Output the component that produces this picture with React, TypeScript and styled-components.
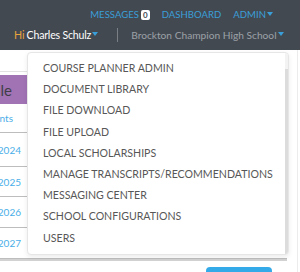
import React from 'react'
import styled, { createGlobalStyle } from 'styled-components'

const GlobalStyle = createGlobalStyle`
  html, body {
    margin: 0;
    padding: 0;
    background: #ffffff;
    font-family: Lato, 'Open Sans', sans-serif;
  }
`

const Header = styled.header`
  background: #434951;
  height: 50px;
  box-sizing: border-box;
  padding: 8px 0 0 14px;
  display: flex;
  flex-direction: column;
  gap: 5px;
`

const TopNav = styled.nav`
  display: flex;
  justify-content: flex-end;
  align-items: center;
  gap: 12px;
  padding-right: 27px;
  height: 13px;
`

const NavLink = styled.span`
  color: #3a9fd8;
  font-size: 9.6px;
  display: flex;
  align-items: center;
  white-space: nowrap;
`

const Badge = styled.span`
  background: #ffffff;
  color: #434951;
  font-size: 8px;
  font-weight: 700;
  border-radius: 2px;
  padding: 1px 2px;
  margin-left: 2px;
  line-height: 8px;
`

const Caret = styled.span<{ $color?: string }>`
  display: inline-block;
  width: 0;
  height: 0;
  margin-left: 1px;
  border-left: 3.5px solid transparent;
  border-right: 3.5px solid transparent;
  border-top: 4px solid ${(p) => p.$color || '#3a9fd8'};
  position: relative;
  top: -1px;
`

const UserRow = styled.div`
  display: flex;
  align-items: center;
  height: 18px;
  white-space: nowrap;
`

const Hi = styled.span`
  color: #e8a33c;
  font-size: 10.6px;
  margin-right: 2px;
`

const UserName = styled.span`
  color: #ffffff;
  font-size: 10.6px;
  display: flex;
  align-items: center;
  letter-spacing: -0.2px;
`

const Separator = styled.span`
  flex-shrink: 0;
  width: 1px;
  height: 14px;
  background: #7a7f86;
  margin: 0 13px 0 19px;
`

const School = styled.span`
  color: #9ca1a7;
  font-size: 10.2px;
  display: flex;
  align-items: center;
`

const Content = styled.main`
  position: relative;
  height: 222px;
  border-right: 1px solid #ececec;
  width: 298px;
  box-sizing: border-box;
  padding-top: 21px;
  overflow: hidden;
`

const Table = styled.div`
  border-top: 1px solid #e2e2e2;
  padding-top: 3px;
  width: 287px;
`

const Row = styled.div<{ $h: number; $head?: boolean }>`
  height: ${(p) => p.$h}px;
  box-sizing: border-box;
  display: flex;
  border-bottom: ${(p) => (p.$head ? 'none' : '1px solid #bdbdbd')};
`

const Cell = styled.div<{ $head?: boolean; $end: number }>`
  width: 27px;
  overflow: hidden;
  display: flex;
  justify-content: flex-end;
  align-items: center;
  white-space: nowrap;
  padding-right: ${(p) => 27 - p.$end}px;
  box-sizing: border-box;
  background: ${(p) => (p.$head ? '#a173b5' : 'transparent')};
  color: ${(p) => (p.$head ? '#3e3e46' : '#4aaee8')};
  font-size: ${(p) => (p.$head ? '15px' : '10px')};
`

const BottomRule = styled.div`
  height: 2px;
  background: #d2d2d2;
  width: 287px;
`

const ButtonBar = styled.div`
  display: flex;
  justify-content: flex-end;
  padding: 6px 25px 0 0;
`

const BlueButton = styled.div`
  width: 66px;
  height: 20px;
  background: #35aae9;
  border-radius: 4px;
`

const Dropdown = styled.ul`
  position: absolute;
  left: 27px;
  top: 2px;
  width: 262px;
  height: 203px;
  box-sizing: border-box;
  margin: 0;
  padding: 5px 0;
  list-style: none;
  background: #ffffff;
  border: 1px solid #e6e6e6;
  border-radius: 4px;
  box-shadow: 0 2px 5px rgba(0, 0, 0, 0.08);
  overflow: hidden;
`

const MenuItem = styled.li`
  height: 21.2px;
  line-height: 21.2px;
  padding-left: 15px;
  color: #575757;
  font-size: 10.6px;
  white-space: nowrap;
`

const ScrollTrack = styled.div`
  position: absolute;
  right: 0;
  top: 0;
  width: 3px;
  height: 100%;
  background: #f3f3f3;
  &:after {
    content: '';
    position: absolute;
    left: 0;
    top: 16px;
    bottom: 0;
    width: 3px;
    background: #dcdcdc;
  }
`

const rows = [
  { label: 'Students', h: 29, end: 13 },
  { label: 'Course Planner 2024', h: 34, end: 21 },
  { label: 'Course Planner 2025', h: 30, end: 21 },
  { label: 'Course Planner 2026', h: 31, end: 21 },
  { label: 'Course Planner 2027', h: 31, end: 21 },
]

const menu = [
  'COURSE PLANNER ADMIN',
  'DOCUMENT LIBRARY',
  'FILE DOWNLOAD',
  'FILE UPLOAD',
  'LOCAL SCHOLARSHIPS',
  'MANAGE TRANSCRIPTS/RECOMMENDATIONS',
  'MESSAGING CENTER',
  'SCHOOL CONFIGURATIONS',
  'USERS',
]

export default function App() {
  return (
    <>
      <GlobalStyle />
      <Header>
        <TopNav>
          <NavLink>
            MESSAGES<Badge>0</Badge>
          </NavLink>
          <NavLink>DASHBOARD</NavLink>
          <NavLink>
            ADMIN<Caret />
          </NavLink>
        </TopNav>
        <UserRow>
          <Hi>Hi</Hi>
          <UserName>
            Charles Schulz<Caret />
          </UserName>
          <Separator />
          <School>
            Brockton Champion High School<Caret />
          </School>
        </UserRow>
      </Header>
      <Content>
        <Table>
          <Row $h={29} $head>
            <Cell $head $end={12}>Course Planner Profile</Cell>
          </Row>
          {rows.map((r) => (
            <Row key={r.label} $h={r.h}>
              <Cell $end={r.end}>{r.label}</Cell>
            </Row>
          ))}
        </Table>
        <BottomRule />
        <ButtonBar>
          <BlueButton />
        </ButtonBar>
        <Dropdown>
          {menu.map((m) => (
            <MenuItem key={m}>{m}</MenuItem>
          ))}
          <ScrollTrack />
        </Dropdown>
      </Content>
    </>
  )
}
